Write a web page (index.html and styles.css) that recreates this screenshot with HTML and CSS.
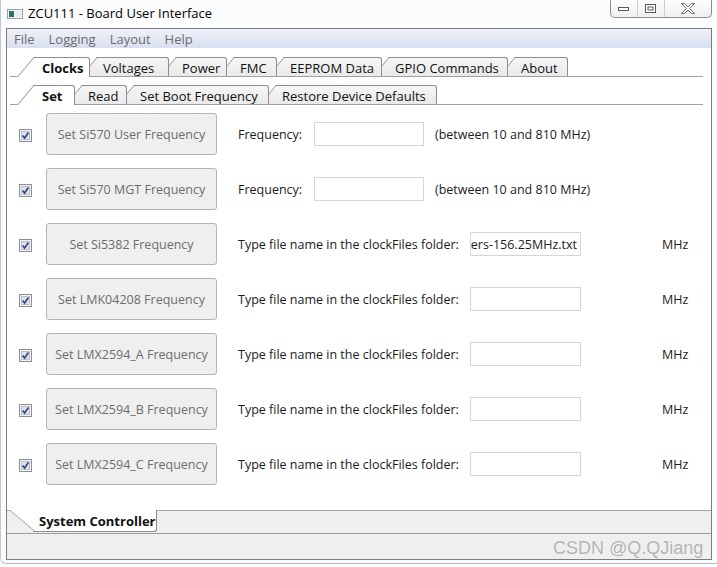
FILE: index.html
```html
<!DOCTYPE html>
<html>
<head>
<meta charset="utf-8">
<title>ZCU111 - Board User Interface</title>
<link rel="stylesheet" href="styles.css">
</head>
<body>
<div class="frame">
  <header class="titlebar">
    <svg class="app-icon" width="16" height="10" viewBox="0 0 16 10">
      <rect x="0.5" y="0.5" width="15" height="9" fill="#f4f6f6" stroke="#9aa3a6"/>
      <rect x="2" y="2" width="5" height="6" fill="#2f6f6a"/>
      <rect x="8" y="2" width="6" height="6" fill="#e8eeee"/>
    </svg>
    <span class="title">ZCU111 - Board User Interface</span>
    <div class="controls">
      <span class="ctl ctl-min">
        <svg width="12" height="6" viewBox="0 0 12 6"><rect x="0.5" y="1.5" width="10" height="3" fill="#fff" stroke="#5c5c5c"/></svg>
      </span>
      <span class="ctl ctl-max">
        <svg width="12" height="10" viewBox="0 0 12 10"><rect x="0.5" y="0.5" width="10" height="8" fill="#fff" stroke="#5c5c5c"/><rect x="3" y="3" width="5" height="3" fill="#fff" stroke="#5c5c5c"/></svg>
      </span>
      <span class="ctl ctl-close">
        <svg width="14" height="11" viewBox="0 0 14 11"><path d="M0.5 0.5 H3.5 L7 3.8 L10.5 0.5 H13.5 L8.6 5.5 L13.5 10.5 H10.5 L7 7.2 L3.5 10.5 H0.5 L5.4 5.5 Z" fill="#fff" stroke="#6a6a6a"/></svg>
      </span>
    </div>
  </header>

  <div class="window">
    <nav class="menubar">
      <span>File</span>
      <span>Logging</span>
      <span>Layout</span>
      <span>Help</span>
    </nav>

    <main class="main">
      <div class="tabstrip tabs-main">
        <div class="tab selected">Clocks</div>
        <div class="tab">Voltages</div>
        <div class="tab">Power</div>
        <div class="tab">FMC</div>
        <div class="tab">EEPROM Data</div>
        <div class="tab">GPIO Commands</div>
        <div class="tab">About</div>
      </div>

      <div class="tabstrip tabs-sub">
        <div class="tab selected">Set</div>
        <div class="tab">Read</div>
        <div class="tab">Set Boot Frequency</div>
        <div class="tab">Restore Device Defaults</div>
      </div>

      <div class="rows">
        <div class="row">
          <span class="check"><svg width="13" height="13" viewBox="0 0 13 13"><rect x="0.5" y="0.5" width="12" height="12" fill="#f3f3f3" stroke="#8e8f8f"/><rect x="2.5" y="2.5" width="8" height="8" fill="#dde3ec" stroke="#b9c1cc"/><path d="M3.6 6.4 L5.6 9 L9.4 3.6" fill="none" stroke="#33478a" stroke-width="1.7"/></svg></span>
          <div class="btn">Set Si570 User Frequency</div>
          <span class="label label-freq">Frequency:</span>
          <span class="field field-freq"></span>
          <span class="hint">(between 10 and 810 MHz)</span>
        </div>
        <div class="row">
          <span class="check"><svg width="13" height="13" viewBox="0 0 13 13"><rect x="0.5" y="0.5" width="12" height="12" fill="#f3f3f3" stroke="#8e8f8f"/><rect x="2.5" y="2.5" width="8" height="8" fill="#dde3ec" stroke="#b9c1cc"/><path d="M3.6 6.4 L5.6 9 L9.4 3.6" fill="none" stroke="#33478a" stroke-width="1.7"/></svg></span>
          <div class="btn">Set Si570 MGT Frequency</div>
          <span class="label label-freq">Frequency:</span>
          <span class="field field-freq"></span>
          <span class="hint">(between 10 and 810 MHz)</span>
        </div>
        <div class="row">
          <span class="check"><svg width="13" height="13" viewBox="0 0 13 13"><rect x="0.5" y="0.5" width="12" height="12" fill="#f3f3f3" stroke="#8e8f8f"/><rect x="2.5" y="2.5" width="8" height="8" fill="#dde3ec" stroke="#b9c1cc"/><path d="M3.6 6.4 L5.6 9 L9.4 3.6" fill="none" stroke="#33478a" stroke-width="1.7"/></svg></span>
          <div class="btn">Set Si5382 Frequency</div>
          <span class="label label-file">Type file name in the clockFiles folder:</span>
          <span class="field field-file">ers-156.25MHz.txt</span>
          <span class="unit">MHz</span>
        </div>
        <div class="row">
          <span class="check"><svg width="13" height="13" viewBox="0 0 13 13"><rect x="0.5" y="0.5" width="12" height="12" fill="#f3f3f3" stroke="#8e8f8f"/><rect x="2.5" y="2.5" width="8" height="8" fill="#dde3ec" stroke="#b9c1cc"/><path d="M3.6 6.4 L5.6 9 L9.4 3.6" fill="none" stroke="#33478a" stroke-width="1.7"/></svg></span>
          <div class="btn">Set LMK04208 Frequency</div>
          <span class="label label-file">Type file name in the clockFiles folder:</span>
          <span class="field field-file"></span>
          <span class="unit">MHz</span>
        </div>
        <div class="row">
          <span class="check"><svg width="13" height="13" viewBox="0 0 13 13"><rect x="0.5" y="0.5" width="12" height="12" fill="#f3f3f3" stroke="#8e8f8f"/><rect x="2.5" y="2.5" width="8" height="8" fill="#dde3ec" stroke="#b9c1cc"/><path d="M3.6 6.4 L5.6 9 L9.4 3.6" fill="none" stroke="#33478a" stroke-width="1.7"/></svg></span>
          <div class="btn">Set LMX2594_A Frequency</div>
          <span class="label label-file">Type file name in the clockFiles folder:</span>
          <span class="field field-file"></span>
          <span class="unit">MHz</span>
        </div>
        <div class="row">
          <span class="check"><svg width="13" height="13" viewBox="0 0 13 13"><rect x="0.5" y="0.5" width="12" height="12" fill="#f3f3f3" stroke="#8e8f8f"/><rect x="2.5" y="2.5" width="8" height="8" fill="#dde3ec" stroke="#b9c1cc"/><path d="M3.6 6.4 L5.6 9 L9.4 3.6" fill="none" stroke="#33478a" stroke-width="1.7"/></svg></span>
          <div class="btn">Set LMX2594_B Frequency</div>
          <span class="label label-file">Type file name in the clockFiles folder:</span>
          <span class="field field-file"></span>
          <span class="unit">MHz</span>
        </div>
        <div class="row">
          <span class="check"><svg width="13" height="13" viewBox="0 0 13 13"><rect x="0.5" y="0.5" width="12" height="12" fill="#f3f3f3" stroke="#8e8f8f"/><rect x="2.5" y="2.5" width="8" height="8" fill="#dde3ec" stroke="#b9c1cc"/><path d="M3.6 6.4 L5.6 9 L9.4 3.6" fill="none" stroke="#33478a" stroke-width="1.7"/></svg></span>
          <div class="btn">Set LMX2594_C Frequency</div>
          <span class="label label-file">Type file name in the clockFiles folder:</span>
          <span class="field field-file"></span>
          <span class="unit">MHz</span>
        </div>
      </div>
    </main>

    <div class="bottom-tabs">
      <div class="btab">System Controller</div>
    </div>
    <div class="statusbar"></div>
  </div>
</div>
<div class="watermark">CSDN @Q.QJiang</div>
</body>
</html>
```

FILE: styles.css
```css
* { box-sizing: border-box; }

html, body { margin: 0; padding: 0; }

body {
  width: 717px;
  height: 567px;
  overflow: hidden;
  position: relative;
  background: #ffffff;
  font-family: "Open Sans", "Noto Sans", sans-serif;
  font-size: 12px;
  color: #1b1b1b;
}

.frame {
  height: 564px;
  border-left: 1px solid #c2c7cf;
  border-bottom: 1px solid #b6bcc6;
  border-bottom-left-radius: 6px;
  background: #fbfcfd;
}

/* title bar */
.titlebar {
  height: 28px;
  display: flex;
  align-items: flex-start;
}

.app-icon { margin: 9px 0 0 6px; flex: none; }

.title {
  margin: 5px 0 0 5px;
  font-size: 13px;
  line-height: 16px;
  color: #000;
}

.controls {
  margin-left: auto;
  margin-right: 5px;
  display: flex;
  height: 18px;
  border: 1px solid #8c8c8c;
  border-top: none;
  border-radius: 0 0 5px 5px;
  background: linear-gradient(#fdfdfd, #eef0f3);
  overflow: hidden;
}

.ctl {
  display: flex;
  align-items: center;
  justify-content: center;
  height: 17px;
}

.ctl-min { width: 27px; border-right: 1px solid #cfcfcf; }
.ctl-max { width: 27px; border-right: 1px solid #cfcfcf; }
.ctl-close { width: 46px; }

/* window client */
.window {
  margin: 0 5px 0 5px;
  height: 532px;
  border: 1px solid #7d7d7d;
  display: flex;
  flex-direction: column;
  background: #fff;
}

.menubar {
  height: 19px;
  flex: none;
  display: flex;
  align-items: center;
  gap: 14px;
  padding-left: 7px;
  background: linear-gradient(#eef1f8, #d8dff0);
  color: #6b6b6b;
  font-size: 13px;
}

.main {
  flex: 1;
  padding-top: 9px;
  background: #fff;
}

/* tabs */
.tabstrip {
  display: grid;
  height: 20px;
  margin: 0 8px 0 3px;
  border-bottom: 1px solid #a0a0a0;
  align-items: end;
}

.tabs-main { grid-template-columns: 80px 79px 58px 50px 105px 126px 60px 1fr; }

.tabs-sub {
  grid-template-columns: 65px 52px 142px 168px 1fr;
  margin-top: 8px;
}

.tab {
  position: relative;
  height: 19px;
  margin-left: 7px;
  padding-left: 6px;
  border-top: 1px solid #8d8d8d;
  border-right: 1px solid #8d8d8d;
  border-top-right-radius: 3px;
  background: linear-gradient(#f6f6f6, #e9e9e9);
  font-size: 13px;
  line-height: 20px;
  color: #111;
  white-space: nowrap;
}

.tab::before {
  content: "";
  position: absolute;
  z-index: -1;
  top: -1px;
  bottom: 0;
  left: -16px;
  width: 24px;
  background: inherit;
  border-top: 1px solid #8d8d8d;
  border-left: 1px solid #8d8d8d;
  transform: skewX(-40deg);
  transform-origin: bottom left;
}

.tab:nth-child(1) { z-index: 8; margin-left: 23px; }
.tab:nth-child(2) { z-index: 7; }
.tab:nth-child(3) { z-index: 6; }
.tab:nth-child(4) { z-index: 5; }
.tab:nth-child(5) { z-index: 4; }
.tab:nth-child(6) { z-index: 3; }
.tab:nth-child(7) { z-index: 2; }

.tab.selected {
  z-index: 10;
  height: 20px;
  margin-bottom: -1px;
  padding-left: 9px;
  background: #fff;
  font-weight: bold;
}

/* rows */
.rows {
  display: flex;
  flex-direction: column;
  gap: 13px;
  padding: 8px 0 0 12px;
}

.row {
  display: flex;
  align-items: center;
  height: 42px;
}

.check {
  display: flex;
  width: 13px;
  height: 13px;
  margin: 2px 14px 0 0;
}

.btn {
  flex: none;
  width: 171px;
  height: 42px;
  display: flex;
  align-items: center;
  justify-content: center;
  border: 1px solid #b4b4b4;
  border-radius: 3px;
  background: #efefef;
  color: #6d6d6d;
  font-size: 12.5px;
}

.label {
  margin-left: 21px;
  font-size: 12.5px;
  white-space: nowrap;
}

.label-freq { width: 76px; }
.label-file { width: 232px; }

.field {
  flex: none;
  height: 24px;
  border: 1px solid #d6d6d6;
  background: #fff;
}

.field-freq { width: 110px; }

.field-file {
  width: 111px;
  display: flex;
  align-items: center;
  justify-content: flex-end;
  padding-right: 3px;
  white-space: nowrap;
  font-size: 12.5px;
}

.hint { margin-left: 11px; font-size: 12.5px; }
.unit { margin-left: 81px; font-size: 12.5px; }

/* bottom tab strip + status bar */
.bottom-tabs {
  height: 23px;
  flex: none;
  display: flex;
  align-items: flex-start;
  border-top: 1px solid #a5a5a5;
  background: #efefef;
}

.btab {
  position: relative;
  z-index: 1;
  width: 124px;
  height: 22px;
  margin: -1px 0 0 26px;
  padding-left: 6px;
  background: #fff;
  border-right: 1px solid #8d8d8d;
  border-bottom: 1px solid #8d8d8d;
  border-bottom-right-radius: 3px;
  font-size: 13px;
  font-weight: bold;
  line-height: 23px;
  color: #111;
  white-space: nowrap;
}

.btab::before {
  content: "";
  position: absolute;
  z-index: -1;
  top: 0;
  bottom: -1px;
  left: -24px;
  width: 30px;
  background: #fff;
  border-left: 1px solid #8d8d8d;
  border-bottom: 1px solid #8d8d8d;
  transform: skewX(50deg);
  transform-origin: top left;
}

.statusbar {
  height: 26px;
  flex: none;
  border-top: 1px solid #9d9d9d;
  background: #efefef;
}

.watermark {
  position: absolute;
  left: 553px;
  top: 538px;
  font-family: "Liberation Sans", Arial, sans-serif;
  font-size: 18px;
  line-height: 20px;
  color: #b3b3b3;
  text-shadow: 0 0 1px #fff;
}
```
